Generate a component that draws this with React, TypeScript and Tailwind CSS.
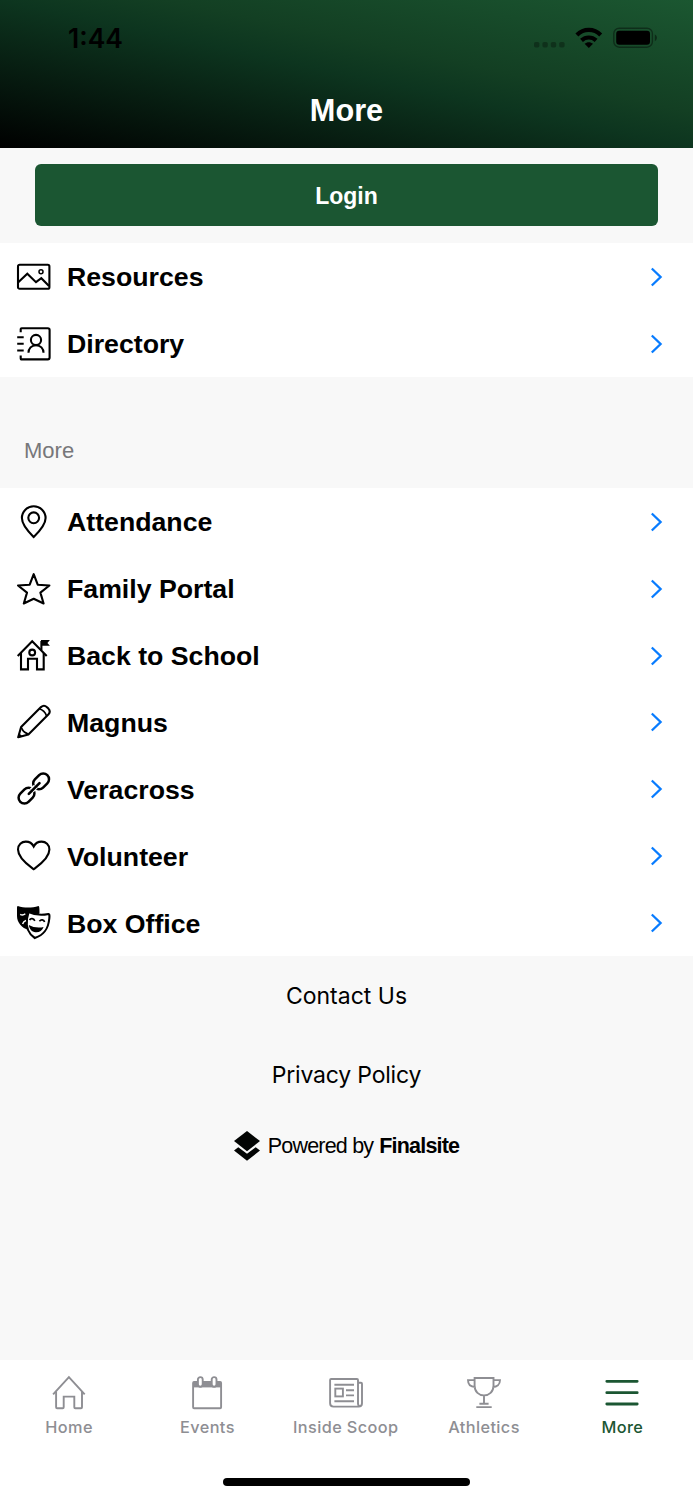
import type { ReactNode } from "react";

interface Item {
  label: string;
  icon: ReactNode;
}

const topItems: Item[] = [
  {
    label: "Resources",
    icon: (
      <>
        <rect x="1" y="4.8" width="31.4" height="24" rx="1.6" />
        <path d="M1.3 22.2 10.3 13.8 19 22.2 24.3 18.2 32 26" />
        <circle cx="24" cy="11.8" r="2" strokeWidth="1.5" />
      </>
    ),
  },
  {
    label: "Directory",
    icon: (
      <>
        <path d="M3.7 5.2V2.2Q3.7 1.2 4.7 1.2H30.8Q32.6 1.2 32.6 3V30.6Q32.6 32.4 30.8 32.4H4.7Q3.7 32.4 3.7 31.4V28.4" />
        <path d="M.2 10.2H6.7M.2 16.8H6.7M.2 23.5H6.7" />
        <circle cx="19" cy="13" r="5.1" />
        <path d="M11.5 25.8C11.5 21.5 14.5 18.2 19 18.2S26.5 21.5 26.5 25.8" />
      </>
    ),
  },
];

const moreItems: Item[] = [
  {
    label: "Attendance",
    icon: (
      <>
        <path d="M16.7 32C12.5 27.8 4.9 20.4 4.9 13 4.9 6.5 10.2 1.2 16.7 1.2S28.6 6.5 28.6 13C28.6 20.4 20.9 27.8 16.7 32Z" />
        <circle cx="16.7" cy="12.8" r="5.4" />
      </>
    ),
  },
  {
    label: "Family Portal",
    icon: (
      <path
        d="M16.7 2.2 20.7 12.7 32.4 13.5 23.4 20.6 26.6 31.5 16.7 26.7 6.8 31.5 10 20.6 1 13.5 12.7 12.7Z"
        strokeLinejoin="round"
      />
    ),
  },
  {
    label: "Back to School",
    icon: (
      <>
        <path d="M.7 17 15.2 2.3 29.7 17" />
        <path d="M4 14V30.4H11V19.8H20V30.4H26.7V14" />
        <circle cx="15.2" cy="13.5" r="2.9" />
        <path d="M24.4 11V2" />
        <path d="M24 1H32.9L30.4 3.9 32.9 6.7H24Z" fill="currentColor" stroke="none" />
      </>
    ),
  },
  {
    label: "Magnus",
    icon: (
      <>
        <path
          d="M1.2 32.2 4.1 22 24 2.1C25.8.5 28.2.5 30 2.2L31.4 3.6C33 5.4 33 7.8 31.3 9.6L11.4 29.4Z"
          strokeLinejoin="round"
        />
        <path d="M22.4 3.8C25.6 4.8 28.4 7.6 29.6 11M4.1 22.4C5 23.2 5.2 25.2 6.7 26.4 8.2 28 10.2 28.2 11 29.2" strokeWidth="1.7" />
        <path d="M.6 33 2 28 5.6 31.5Z" fill="currentColor" stroke="none" />
      </>
    ),
  },
  {
    label: "Veracross",
    icon: (
      <>
        <g strokeWidth="2.5">
          <rect x="15.3" y="3.6" width="17.6" height="11.6" rx="5.8" transform="rotate(-45 24.1 9.4)" />
          <rect x=".7" y="17.8" width="17.6" height="11.6" rx="5.8" transform="rotate(-45 9.5 23.6)" />
        </g>
        <path d="M14.6 18.7 18.8 14.5" stroke="#fff" strokeWidth="5.2" />
        <path d="M11.8 21.9 22.5 11.2" strokeWidth="2.6" strokeLinecap="round" />
      </>
    ),
  },
  {
    label: "Volunteer",
    icon: (
      <path d="M16.7 30.2C12.5 27 1 19.6 1 10.5 1 5.6 4.6 2.6 8.8 2.6 12.6 2.6 15.3 4.7 16.7 7.5 18.1 4.7 20.8 2.6 24.6 2.6 28.8 2.6 32.4 5.6 32.4 10.5 32.4 19.6 20.9 27 16.7 30.2Z" />
    ),
  },
  {
    label: "Box Office",
    icon: (
      <>
        <path
          d="M.8 0C7 2 15 2 21.5 0 22.3.5 22.5 2 22.5 7L11 20 11.5 24C5 22 0 16.5 0 10V1.5Q0 .3.8 0Z"
          fill="currentColor"
          stroke="none"
        />
        <path
          d="M11.6 6C18 9 25 9.4 31.4 8 32.5 7.8 32.6 10 32.3 12.5 31.4 22 28 28.6 17.8 32 11 27.5 8.8 21 10 12.5Z"
          fill="#fff"
        />
        <path d="M3.2 8.4C5 9.4 7 8.9 8.3 7.8M5.6 18C6.2 16 7.4 14.8 9 14.4" stroke="#fff" strokeWidth="1.5" />
        <path d="M12.6 14C13.7 11.8 16.6 12.2 17.8 14.8M22.4 15.2C24 13.3 26.8 13.5 27.6 16" strokeWidth="1.7" />
        <path d="M11.8 18.9C16 21.4 21.8 22 26.6 20.9 25.2 24.6 22 26.8 18.5 26.3 14.9 25.9 12.4 22.7 11.8 18.9Z" fill="currentColor" stroke="none" />
      </>
    ),
  },
];

const tabs: Item[] = [
  {
    label: "Home",
    icon: (
      <>
        <path d="M1.1 18.4 16.9 1.2 32.7 18.4" />
        <path d="M4.1 15.5V31.3Q4.1 32.3 5.1 32.3H10.7Q11.7 32.3 11.7 31.3V20.6H22.3V31.3Q22.3 32.3 23.3 32.3H29Q30 32.3 30 31.3V15.5" />
      </>
    ),
  },
  {
    label: "Events",
    icon: (
      <>
        <rect x="3.1" y="5.9" width="28" height="26.4" rx="1" />
        <path d="M3 5.8H31.2V11.4H3Z" fill="currentColor" stroke="none" />
        <rect x="7.9" y="1.1" width="4.8" height="9.6" rx="2.4" fill="#fff" />
        <rect x="21.7" y="1.1" width="4.8" height="9.6" rx="2.4" fill="#fff" />
      </>
    ),
  },
  {
    label: "Inside Scoop",
    icon: (
      <>
        <path d="M29 28V4Q29 3 28 3H2.1Q1.1 3 1.1 4V27.2Q1.1 30.6 4.5 30.6H29.6Q33 30.6 33 27.2V7.8Q33 6.8 32 6.8H29M29 27.2Q29 30 31 30.4" />
        <rect x="6.3" y="12.6" width="7.6" height="7.8" />
        <path d="M5.4 8.8H25M17 14.2H25M17 19.4H25M5.4 25.2H25" />
      </>
    ),
  },
  {
    label: "Athletics",
    icon: (
      <>
        <path d="M7.6 2H26.5V9.8C26.5 15.8 22 19.4 17 19.4S7.6 15.8 7.6 9.8ZM7.6 4.1H1C1 8.8 4.2 11 8.2 11M26.5 4.1H33C33 8.8 29.8 11 25.9 11M17 19.4V27.7M12.4 27.7H21.6M9.3 31.1H24.7" />
      </>
    ),
  },
  {
    label: "More",
    icon: <path d="M1.8 5.3H32.2M1.8 16.7H32.2M1.8 28H32.2" strokeWidth="2.8" strokeLinecap="round" />,
  },
];

function Icon({ children }: { children: ReactNode }) {
  return (
    <svg
      viewBox="0 0 34 34"
      className="w-[34px] h-[34px] shrink-0 overflow-visible"
      fill="none"
      stroke="currentColor"
      strokeWidth="2.1"
    >
      {children}
    </svg>
  );
}

function StatusBar() {
  return (
    <div className="flex items-center justify-between h-[76px] pl-[68px] pr-9 font-[Inter,sans-serif] text-black">
      <span className="pt-0.5 text-[26.5px] font-semibold">1:44</span>
      <svg viewBox="534 27 123 22" className="w-[123px] h-[22px]">
        <g fillOpacity="0.3">
          <rect x="534" y="42" width="5.4" height="5.4" rx="1.6" />
          <rect x="542.4" y="42" width="5.4" height="5.4" rx="1.6" />
          <rect x="550.8" y="42" width="5.4" height="5.4" rx="1.6" />
          <rect x="559.2" y="42" width="5.4" height="5.4" rx="1.6" />
        </g>
        <g fill="none" stroke="#000" strokeWidth="4.2">
          <path d="M576.9 34.9C583.5 28.3 594.1 28.3 600.7 34.9" />
          <path d="M581.5 40.4C585.7 36.5 591.9 36.5 596.1 40.4" />
        </g>
        <path d="M588.8 48 584.6 43.8C587 41.7 590.6 41.7 593 43.8Z" />
        <rect x="613.8" y="28.2" width="38.6" height="19" rx="5.4" fill="none" stroke="#000" strokeOpacity="0.4" strokeWidth="1.4" />
        <rect x="616.2" y="30.7" width="33.8" height="14" rx="3" />
        <path d="M654.8 34.4C657.6 35.5 657.6 40.1 654.8 41.2Z" fillOpacity="0.45" />
      </svg>
    </div>
  );
}

function MenuList({ items }: { items: Item[] }) {
  return (
    <ul className="bg-white text-black">
      {items.map((item) => (
        <li key={item.label} className="flex items-center h-[66.95px] pt-[0.6px] pl-[17px] pr-[30px]">
          <Icon>{item.icon}</Icon>
          <span className="ml-4 flex-1 pt-[1.4px] text-[26.7px] leading-none font-bold">{item.label}</span>
          <svg viewBox="0 0 13 20" className="w-[13px] h-5" fill="none" stroke="#087cff" strokeWidth="2.3">
            <path d="M1.8 1.5 10.6 10 1.8 18.5" />
          </svg>
        </li>
      ))}
    </ul>
  );
}

export default function App() {
  return (
    <div className="flex flex-col w-[693px] h-[1500px] bg-[#f8f8f8] font-['Liberation_Sans',Arial,sans-serif]">
      <header className="h-[147.6px] bg-[linear-gradient(to_top_right,#000,#0d351f_50%,#133f23_62%,#1b5731)]">
        <StatusBar />
        <h1 className="pt-[19px] text-center text-[30.7px] leading-8 font-bold text-white">More</h1>
      </header>

      <div className="h-[95.4px] px-[35px] pt-[16.7px]">
        <button className="w-full h-[61.6px] pt-0.5 rounded-md bg-[#1b5632] text-[23px] font-bold text-white">
          Login
        </button>
      </div>

      <MenuList items={topItems} />
      <h2 className="h-[111px] pt-[61px] pl-6 text-[22px] leading-[26px] text-[#77777a]">More</h2>
      <MenuList items={moreItems} />

      <div className="flex flex-col items-center pt-[23.6px] font-[Inter,sans-serif] text-[23px] leading-8 text-black">
        <a>Contact Us</a>
        <a className="mt-[46.6px] tracking-[-0.2px]">Privacy Policy</a>
        <div className="mt-[39px] flex items-center font-['Liberation_Sans',Arial,sans-serif] text-[21.5px]">
          <svg viewBox="0 0 26 30" className="w-[26px] h-[30px] mr-2" fill="#030504">
            <path d="M13 0 26 10 13 20.2 0 10Z" />
            <path d="M0 19.6 4.3 16.2 13 22.8 21.7 16.2 26 19.6 13 29.8Z" />
          </svg>
          <span className="tracking-[-0.8px]">Powered by</span>
          <span className="ml-1.5 font-bold tracking-[-0.8px]">Finalsite</span>
        </div>
      </div>

      <nav className="mt-auto h-[140px] bg-white">
        <div className="grid grid-cols-5 h-[117.5px] pt-4 mr-[1.5px]">
          {tabs.map((tab) => (
            <a
              key={tab.label}
              className={`flex flex-col items-center ${tab.label === "More" ? "text-[#1b5632]" : "text-[#8e8e93]"}`}
            >
              <Icon>
                <g strokeWidth="1.9">{tab.icon}</g>
              </Icon>
              <span className="mt-[7px] font-[Inter,sans-serif] text-[16.3px] leading-5 font-medium tracking-[0.4px]">
                {tab.label}
              </span>
            </a>
          ))}
        </div>
        <div className="mx-auto w-[247px] h-[8.5px] rounded-full bg-black" />
      </nav>
    </div>
  );
}
